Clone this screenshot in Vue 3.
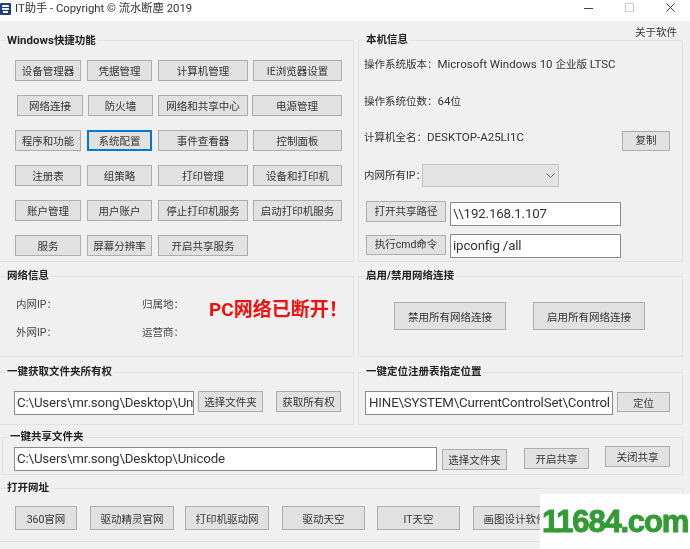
<script setup>
const rows = [
  { cls: 'r1', items: ['设备管理器', '凭据管理', '计算机管理', 'IE浏览器设置'] },
  { cls: 'r2', items: ['网络连接', '防火墙', '网络和共享中心', '电源管理'] },
  { cls: 'r1', items: ['程序和功能', '系统配置', '事件查看器', '控制面板'] },
  { cls: 'r1', items: ['注册表', '组策略', '打印管理', '设备和打印机'] },
  { cls: 'r1', items: ['账户管理', '用户账户', '停止打印机服务', '启动打印机服务'] },
  { cls: 'r1', items: ['服务', '屏幕分辨率', '开启共享服务'] }
]
const links = ['360官网', '驱动精灵官网', '打印机驱动网', '驱动天空', 'IT天空', '画图设计软件']
</script>

<template>
  <div class="app">
    <header class="titlebar">
      <div class="title">
        <svg class="logo" width="11" height="12" viewBox="0 0 11 12">
          <rect width="11" height="12" rx="1" fill="#1d3f7a" />
          <rect x="2" y="2" width="7" height="5" rx="1" fill="#f2f5fa" />
          <rect x="3" y="8" width="5" height="2" fill="#f2f5fa" />
          <rect x="0" y="4" width="11" height="1" fill="#1d3f7a" />
        </svg>
        <span>IT助手 - Copyright © 流水断塵 2019</span>
      </div>
      <div class="controls">
        <svg width="10" height="10" viewBox="0 0 10 10"><path d="M0 5.500h9" stroke="#444" /></svg>
        <svg width="10" height="10" viewBox="0 0 10 10"><rect x=".5" y=".5" width="8" height="8" fill="none" stroke="#ccc" /></svg>
        <svg width="10" height="10" viewBox="0 0 10 10"><path d="M.5.5l8 8M8.500.5l-8 8" stroke="#444" /></svg>
      </div>
    </header>

    <main class="content">
      <div class="top">
        <section class="group win">
          <h2><span class="lat">Windows</span>快捷功能</h2>
          <div v-for="(row, i) in rows" :key="i" class="row" :class="row.cls">
            <button v-for="(b, j) in row.items" :key="b" :class="['b' + j, { focus: b === '系统配置' }]">{{ b }}</button>
          </div>
        </section>

        <section class="group info">
          <a class="about">关于软件</a>
          <h2>本机信息</h2>
          <p class="line">操作系统版本：<span class="lat">Microsoft Windows 10 </span>企业版<span class="lat"> LTSC</span></p>
          <p class="line second">操作系统位数：<span class="lat">64</span>位</p>
          <div class="name-row">
            <p class="line">计算机全名：<span class="lat">DESKTOP-A25LI1C</span></p>
            <button class="copy">复制</button>
          </div>
          <div class="ip-row">
            <span class="ip-label">内网所有IP：</span>
            <div class="select">
              <svg width="9" height="5" viewBox="0 0 9 5"><path d="M.5.5l4 4 4-4" fill="none" stroke="#666" /></svg>
            </div>
          </div>
          <div class="cmd-row first">
            <button>打开共享路径</button>
            <div class="input">\\192.168.1.107</div>
          </div>
          <div class="cmd-row last">
            <button>执行cmd命令</button>
            <div class="input">ipconfig /all</div>
          </div>
        </section>
      </div>

      <div class="mid">
        <section class="group net">
          <h2>网络信息</h2>
          <div class="net-grid">
            <span>内网IP：</span><span>归属地：</span>
            <span>外网IP：</span><span>运营商：</span>
          </div>
          <strong class="alert">PC网络已断开！</strong>
        </section>
        <section class="group toggle">
          <h2>启用/禁用网络连接</h2>
          <div class="toggle-row">
            <button>禁用所有网络连接</button>
            <button>启用所有网络连接</button>
          </div>
        </section>
      </div>

      <div class="third">
        <section class="group owner">
          <h2>一键获取文件夹所有权</h2>
          <div class="owner-row">
            <div class="input clip">C:\Users\mr.song\Desktop\Unicode</div>
            <button class="pick">选择文件夹</button>
            <button class="take">获取所有权</button>
          </div>
        </section>
        <section class="group locate">
          <h2>一键定位注册表指定位置</h2>
          <div class="locate-row">
            <div class="input clip reg">HINE\SYSTEM\CurrentControlSet\Control</div>
            <button>定位</button>
          </div>
        </section>
      </div>

      <section class="group share">
        <h2>一键共享文件夹</h2>
        <div class="share-row">
          <div class="input">C:\Users\mr.song\Desktop\Unicode</div>
          <button class="s1">选择文件夹</button>
          <button class="s2">开启共享</button>
          <button class="s3">关闭共享</button>
        </div>
      </section>

      <section class="group open">
        <h2>打开网址</h2>
        <div class="link-row">
          <button v-for="l in links" :key="l">{{ l }}</button>
        </div>
      </section>
    </main>

    <div class="watermark">11684.com</div>
  </div>
</template>

<style>
html, body { margin: 0; background: #f0f0f0; overflow: hidden; }
</style>

<style scoped>
.app {
  position: relative;
  width: 690px;
  height: 549px;
  overflow: hidden;
  background: #f0f0f0;
  color: #333;
  font: 10.5px Roboto, "Noto Sans CJK SC", sans-serif;
  filter: blur(0.35px);
}
.lat { font-size: 11.5px; }
.titlebar {
  box-sizing: border-box;
  height: 21px;
  padding-top: 2px;
  background: #fff;
  display: flex;
  justify-content: space-between;
  align-items: flex-start;
}
.title { display: flex; align-items: center; gap: 4px; color: #333; font-size: 11.3px; line-height: 13px; }
.controls { display: flex; gap: 31px; padding: 1px 14px 0 0; }
.content { padding: 19px 7px 0 0; display: flex; flex-direction: column; }
.group {
  position: relative;
  box-sizing: border-box;
  border: 1px solid #e3e3e3;
}
.group h2 {
  position: absolute;
  top: -8px;
  left: 6px;
  margin: 0;
  padding: 0 2px 0 1px;
  background: #f0f0f0;
  font-size: 10.5px;
  line-height: 14px;
  font-weight: 700;
  color: #222;
}
button {
  box-sizing: border-box;
  margin: 0;
  padding: 0;
  height: 21px;
  background: #e1e1e1;
  border: 1px solid #adadad;
  color: #333;
  font: inherit;
  white-space: nowrap;
  overflow: hidden;
}
button.focus { border: 1px solid #0078d7; box-shadow: inset 0 0 0 1px #0078d7; }
.input {
  box-sizing: border-box;
  height: 24px;
  background: #fff;
  border: 1px solid #8a8a8a;
  padding: 0 2px;
  color: #333;
  font-size: 13.3px;
  letter-spacing: -0.15px;
  line-height: 22px;
  white-space: nowrap;
}
.clip { overflow: hidden; }

.top { display: flex; gap: 4px; height: 222px; }
.win { width: 354px; border-left: 0; padding-top: 19px; }
.row { display: flex; gap: 5px; margin: 0 0 14px 15px; }
.b0 { width: 66px; }
.b1 { width: 65px; margin-left: 1px; }
.b2 { width: 90px; margin-left: 1px; }
.b3 { width: 89px; }
.r2 { margin-left: 17px; }
.r2 .b1 { margin-left: 0; }
.r2 .b2 { margin-left: 0; }
.r2 .b3 { width: 90px; margin-left: -1px; }

.info { width: 325px; padding: 14px 0 0 5px; line-height: 18px; }
.about { position: absolute; top: -16px; right: 5px; line-height: 16px; }
.line { margin: 0; line-height: 18px; }
.second { margin-top: 18px; }
.name-row { display: flex; justify-content: space-between; align-items: flex-start; margin-top: 17px; padding-right: 12px; }
.copy { width: 48px; height: 20px; margin-top: 3px; }
.ip-row { display: flex; align-items: center; margin-top: 13px; }
.ip-label { width: 58px; white-space: nowrap; }
.select { box-sizing: border-box; width: 137px; height: 23px; background: #e3e3e3; border: 1px solid #c4c4c4; display: flex; align-items: center; justify-content: flex-end; padding-right: 3px; }
.cmd-row { display: flex; gap: 4px; align-items: flex-start; margin: 14px 0 0 2px; }
.cmd-row button { width: 80px; }
.cmd-row .input { width: 171px; }
.first .input { margin-top: 1px; }
.last { margin-top: 8px; }
.last button { margin-top: 1px; height: 20px; }

.mid { display: flex; gap: 4px; margin-top: 14px; height: 81px; }
.net { width: 354px; border-left: 0; position: relative; }
.net-grid { display: grid; grid-template-columns: 126px auto; row-gap: 10px; padding: 19px 0 0 16px; color: #444; line-height: 18px; }
.alert { position: absolute; left: 209px; top: 21px; color: #f01010; font-size: 19px; line-height: 24px; font-weight: 700; }
.toggle { width: 325px; }
.toggle-row { display: flex; gap: 27px; padding: 25px 0 0 35px; }
.toggle-row button { width: 112px; height: 28px; }

.third { display: flex; gap: 4px; margin-top: 15px; height: 53px; }
.owner { width: 354px; border-left: 0; }
.owner-row { display: flex; padding: 18px 0 0 14px; }
.owner-row .input { width: 180px; }
.pick { width: 65px; margin-left: 4px; }
.take { width: 65px; margin-left: 13px; }
.locate { width: 325px; }
.locate-row { display: flex; gap: 4px; padding: 18px 0 0 6px; }
.reg { width: 248px; padding-left: 3px; }
.locate-row button { width: 53px; margin-top: 1px; height: 20px; }

.share { margin: 12px 0 0 2px; height: 38px; }
.share-row { display: flex; align-items: flex-start; padding: 9px 0 0 11px; }
.share-row .input { width: 423px; }
.s1 { width: 65px; margin: 2px 0 0 5px; }
.s2 { width: 65px; margin: 1px 0 0 17px; }
.s3 { width: 65px; margin: -1px 0 0 16px; }

.open { margin-top: 13px; height: 54px; border-left: 0; }
.link-row { display: flex; padding: 17px 0 0 15px; }
.link-row button { height: 24px; width: 84px; margin-left: 13px; }
.link-row button:nth-child(1) { width: 62px; margin-left: 0; }
.link-row button:nth-child(3) { margin-left: 11px; }
.link-row button:nth-child(4) { width: 83px; }
.link-row button:nth-child(5) { width: 83px; margin-left: 12px; }

.watermark {
  position: absolute;
  left: 540px;
  top: 494px;
  width: 150px;
  height: 55px;
  background: #fff;
  color: #339b35;
  font: 700 31px/55px "Liberation Sans", sans-serif;
  letter-spacing: -1.2px;
  text-align: center;
  -webkit-text-stroke: 1px #339b35;
}
</style>
